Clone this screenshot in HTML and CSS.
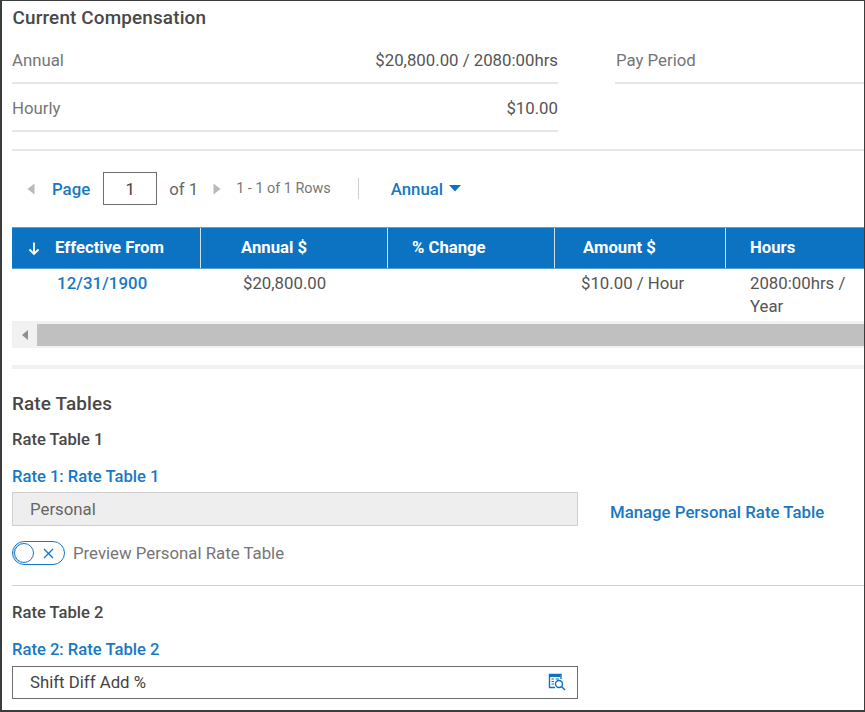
FILE: index.html
```html
<!DOCTYPE html>
<html lang="en">
<head>
<meta charset="utf-8">
<title>Current Compensation</title>
<link rel="stylesheet" href="styles.css">
</head>
<body>
<main class="frame">
  <section class="comp">
    <h2 class="title">Current Compensation</h2>
    <div class="comp-grid">
      <div class="comp-col">
        <div class="kv"><span class="k">Annual</span><span class="v">$20,800.00 / 2080:00hrs</span></div>
        <div class="kv"><span class="k">Hourly</span><span class="v">$10.00</span></div>
      </div>
      <div class="comp-col comp-right">
        <div class="kv"><span class="k">Pay Period</span></div>
      </div>
    </div>
  </section>
  <div class="pager">
    <svg class="arrow" width="8" height="12" viewBox="0 0 8 12"><path d="M7.500 0.500V11.500L0.500 6Z" fill="#b9b9b9"/></svg>
    <a class="link page-label">Page</a>
    <span class="page-box">1</span>
    <span class="of">of 1</span>
    <svg class="arrow arrow-next" width="8" height="12" viewBox="0 0 8 12"><path d="M0.500 0.500V11.500L7.500 6Z" fill="#b9b9b9"/></svg>
    <span class="rows">1 - 1 of 1 Rows</span>
    <span class="sep"></span>
    <a class="link view">Annual</a>
    <svg class="caret" width="12" height="7" viewBox="0 0 12 7"><path d="M0 0H12L6 6.500Z" fill="#0c73c2"/></svg>
  </div>
  <div class="table">
    <div class="thead">
      <div class="th th-first"><svg class="sort" width="12" height="13" viewBox="0 0 12 13"><path d="M6 0.500V12M1.500 7.500L6 12L10.500 7.500" fill="none" stroke="#fff" stroke-width="1.800"/></svg>Effective From</div>
      <div class="th th-annual">Annual $</div>
      <div class="th">% Change</div>
      <div class="th th-amount">Amount $</div>
      <div class="th th-last">Hours</div>
    </div>
    <div class="trow">
      <div class="td td-first"><a class="link date">12/31/1900</a></div>
      <div class="td td-annual">$20,800.00</div>
      <div class="td"></div>
      <div class="td">$10.00 / Hour</div>
      <div class="td td-last">2080:00hrs / Year</div>
    </div>
    <div class="scrollbar">
      <div class="scroll-btn"><svg width="6" height="10" viewBox="0 0 6 10"><path d="M6 0V10L0 5Z" fill="#8f8f8f"/></svg></div>
      <div class="scroll-thumb"></div>
    </div>
  </div>
  <div class="band"></div>
  <section class="rates">
    <h2 class="title rates-title">Rate Tables</h2>
    <h3 class="sub">Rate Table 1</h3>
    <div class="rate-line">
      <div class="rate-field">
        <label class="link flabel">Rate 1: Rate Table 1</label>
        <div class="input input-off">Personal</div>
      </div>
      <a class="link manage">Manage Personal Rate Table</a>
    </div>
    <div class="toggle-row">
      <span class="toggle">
        <span class="knob"></span>
        <svg class="x" width="11" height="11" viewBox="0 0 11 11"><path d="M1 1L10 10M10 1L1 10" stroke="#1878c4" stroke-width="1.300" fill="none"/></svg>
      </span>
      <span class="toggle-label">Preview Personal Rate Table</span>
    </div>
    <div class="rule"></div>
    <h3 class="sub sub-two">Rate Table 2</h3>
    <div class="rate-field">
      <label class="link flabel">Rate 2: Rate Table 2</label>
      <div class="input input-on">Shift Diff Add %
        <svg class="lookup" width="18" height="18" viewBox="0 0 18 18">
          <path d="M7 14.500H1.500V1.500H13V6" fill="none" stroke="#0c73c2" stroke-width="1.400"/>
          <path d="M2 2H12.500V4H2Z" fill="#0c73c2"/>
          <path d="M3.500 6H6M7.500 6H11M3.500 8.500H6M3.500 11H6" stroke="#0c73c2" stroke-width="1.200" fill="none"/>
          <circle cx="11" cy="11" r="3.500" fill="#fff" stroke="#0c73c2" stroke-width="1.400"/>
          <path d="M13.500 13.500L17 17" stroke="#0c73c2" stroke-width="1.500" fill="none"/>
        </svg>
      </div>
    </div>
  </section>
</main>
</body>
</html>
```
FILE: styles.css
```css
* { box-sizing: border-box; }
html, body { margin: 0; padding: 0; background: #fff; }
body { font-family: Roboto, "Liberation Sans", sans-serif; color: #555; font-size: 16.800px; }
.frame {
  width: 865px; height: 712px; overflow: hidden;
  border: 1px solid #3c3c3c; border-width: 1px 1px 2px 2px;
  padding-left: 10px;
}
h2, h3 { margin: 0; }
.link { color: #1878c4; font-weight: 500; }
.title { font-size: 18.900px; font-weight: 500; color: #484848; line-height: 24px; letter-spacing: 0.150px; }
.comp { height: 150px; border-bottom: 2px solid #e6e6e6; padding-top: 5px; }
.comp .title { padding-left: 0.500px; }
.comp-grid { display: flex; margin-top: 6px; }
.comp-col { width: 546px; }
.comp-right { width: auto; flex: 1; margin-left: 57px; }
.comp-right .kv { padding-left: 1px; }
.kv {
  display: flex; justify-content: space-between; align-items: center;
  height: 48px; padding: 1px 0 0 0; border-bottom: 2px solid #e6e6e6;
  line-height: 24px;
}
.k { color: #757575; }
.v { color: #555; }
.pager { display: flex; align-items: center; height: 76px; padding: 0 0 1px 15px; }
.page-label { margin-left: 17px; }
.page-box {
  width: 54px; height: 33px; border: 1px solid #6e6e6e; margin-left: 13px;
  display: flex; align-items: center; justify-content: center; color: #444;
}
.of { margin-left: 12px; color: #666; }
.arrow-next { margin-left: 15px; }
.rows { margin-left: 15px; font-size: 14.400px; color: #777; }
.sep { width: 1px; height: 21px; background: #cfcfcf; margin-left: 27px; }
.view { margin-left: 32px; }
.caret { margin-left: 6px; }
.table { width: 853px; }
.thead, .trow { display: grid; grid-template-columns: 189px 187px 167px 171px 139px; }
.thead { height: 42px; background: #0c73c2; border-top: 1px solid #5f9fd6; border-bottom: 1px solid #5f9fd6; }
.th {
  color: #fff; font-weight: 700; font-size: 16.700px; line-height: 40px;
  padding-left: 24px; border-right: 1px solid #cfe0ef; white-space: nowrap;
}
.th-first { padding-left: 16px; display: flex; align-items: center; }
.th-annual { padding-left: 40px; }
.th-amount { padding-left: 28px; }
.th-last { border-right: 0; }
.sort { margin-right: 15px; }
.trow { height: 52px; padding-top: 3px; }
.td { padding: 0 16px 0 26px; line-height: 23px; color: #555; }
.td-first { padding-left: 45px; }
.td-annual { padding-left: 42px; }
.date { letter-spacing: 0.100px; }
.td-last { padding-left: 24px; padding-right: 0; }
.scrollbar { display: flex; height: 27px; background: #f1f1f1; padding: 3px 0 2px; }
.scroll-btn { width: 25px; display: flex; align-items: center; justify-content: center; }
.scroll-thumb { flex: 1; background: #c0c0c0; }
.band { height: 4px; background: #f0f0f0; margin-top: 17px; }
.rates { padding-top: 23px; }
.sub { font-size: 16.600px; font-weight: 500; color: #484848; line-height: 22px; margin-top: 13px; }
.rate-line { display: flex; }
.rate-field { width: 566px; }
.flabel { display: block; line-height: 22px; margin-top: 15px; font-size: 16.600px; }
.input {
  position: relative; height: 34px; margin-top: 4px; border: 1px solid #6e6e6e;
  padding-left: 17px; line-height: 33px; color: #444;
}
.input-on { margin-top: 5px; line-height: 31px; height: 33px; }
.input-off {
  background-color: #eee; border-color: #cfcfcf; color: #666;
  background-image: radial-gradient(#e6e6e6 0.7px, transparent 0.7px); background-size: 4px 4px;
}
.lookup { position: absolute; right: 11px; top: 6px; }
.manage { margin: 50px 0 0 32px; line-height: 22px; white-space: nowrap; }
.toggle-row { display: flex; align-items: center; margin-top: 15px; height: 24px; }
.toggle {
  position: relative; width: 53px; height: 24px; border: 1px solid #1878c4; border-radius: 12px;
  display: flex; align-items: center; justify-content: flex-end; padding-right: 10px;
}
.knob { position: absolute; left: 1px; top: 1px; width: 20px; height: 20px; border-radius: 50%; border: 1px solid #1878c4; box-shadow: -1px 0 0 #8fc0e6; }
.toggle-label { margin-left: 8px; color: #757575; }
.rule { height: 1px; background: #d2d2d2; margin-top: 20px; }
.sub-two { margin-top: 16px; }
```
